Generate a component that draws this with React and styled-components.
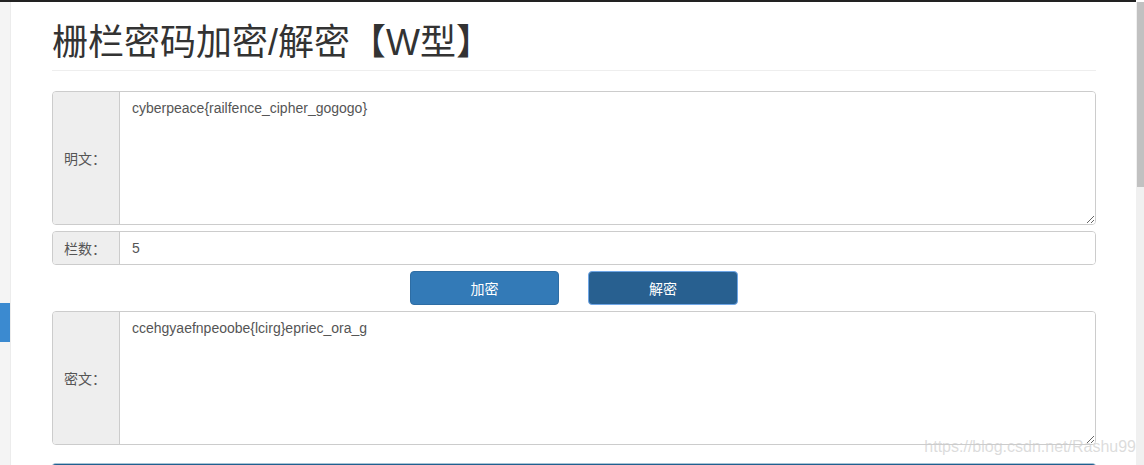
import React from 'react';
import styled, { createGlobalStyle } from 'styled-components';

const GlobalStyle = createGlobalStyle`
  html, body {
    margin: 0;
    padding: 0;
    overflow: hidden;
    background: #fff;
  }
  * {
    box-sizing: border-box;
  }
`;

const FONT = `"Liberation Sans", Arial, "Noto Sans CJK SC", sans-serif`;

const Page = styled.div`
  height: 465px;
  display: flex;
  flex-direction: column;
  font-family: ${FONT};
  font-size: 14px;
  color: #333;
`;

const TopBar = styled.div`
  height: 2px;
  background: #222;
  margin-right: 8px;
`;

const Body = styled.div`
  flex: 1;
  display: flex;
  min-height: 0;
`;

const Sidebar = styled.div`
  width: 11px;
  background: #f4f4f4;
  border-right: 1px solid #ececec;
  display: flex;
  flex-direction: column;
`;

const SideMarker = styled.div`
  margin-top: 301px;
  height: 39px;
  width: 10px;
  background: #3b8ad0;
`;

const Main = styled.div`
  flex: 1;
  padding: 0 40px 0 41px;
  overflow: hidden;
  position: relative;
`;

const Title = styled.h1`
  margin: 21px 0 20px;
  padding-bottom: 7px;
  border-bottom: 1px solid #eee;
  font-family: "Liberation Sans", "Noto Sans CJK SC", sans-serif;
  font-size: 36px;
  font-weight: 400;
  line-height: 1.1;
  color: #333;
`;

const Group = styled.div`
  display: flex;
  border: 1px solid #ccc;
  border-radius: 4px;
  overflow: hidden;
  margin-bottom: ${(p) => p.$gap || 6}px;
  height: ${(p) => p.$h}px;
  box-shadow: inset 0 1px 1px rgba(0, 0, 0, 0.075);
`;

const Addon = styled.div`
  width: 67px;
  flex-shrink: 0;
  background: #eee;
  border-right: 1px solid #ccc;
  color: #555;
  display: flex;
  align-items: center;
  justify-content: center;
  padding-right: 2px;
`;

const Area = styled.textarea`
  flex: 1;
  border: 0;
  outline: 0;
  padding: 7px 12px;
  font-family: ${FONT};
  font-size: 14px;
  line-height: 1.42857;
  color: #555;
  resize: vertical;
  background: #fff;
`;

const Field = styled.input`
  flex: 1;
  border: 0;
  outline: 0;
  padding: 6px 12px;
  font-family: ${FONT};
  font-size: 14px;
  color: #555;
  background: #fff;
`;

const Actions = styled.div`
  display: flex;
  justify-content: center;
  gap: 29px;
  margin-bottom: 6px;
`;

const Button = styled.button`
  width: ${(p) => p.$w}px;
  height: 34px;
  border-radius: 4px;
  font-family: ${FONT};
  font-size: 14px;
  color: #fff;
  cursor: pointer;
  background: ${(p) => (p.$active ? '#286090' : '#337ab7')};
  border: 1px solid ${(p) => (p.$active ? '#6fa6e6' : '#2e6da4')};
`;

const BottomPanel = styled.div`
  margin-top: 18px;
  height: 20px;
  background: #20608f;
  border-top: 1px solid #a9c3d6;
  border-radius: 4px 4px 0 0;
`;

const Watermark = styled.div`
  position: absolute;
  right: 0;
  top: 436px;
  font-size: 16px;
  color: rgba(205, 205, 205, 0.7);
  pointer-events: none;
  white-space: nowrap;
`;

const Scrollbar = styled.div`
  width: 8px;
  background: #f0f0f0;
  display: flex;
  flex-direction: column;
  padding-left: 1px;
`;

const Thumb = styled.div`
  height: 185px;
  background: #c1c1c1;
`;

export default function App() {
  return (
    <Page>
      <GlobalStyle />
      <TopBar />
      <Body>
        <Sidebar>
          <SideMarker />
        </Sidebar>
        <Main>
          <Title>栅栏密码加密/解密【W型】</Title>
          <Group $h={134} $gap={6}>
            <Addon>明文：</Addon>
            <Area defaultValue="cyberpeace{railfence_cipher_gogogo}" />
          </Group>
          <Group $h={34} $gap={6}>
            <Addon>栏数：</Addon>
            <Field defaultValue="5" />
          </Group>
          <Actions>
            <Button $w={149}>加密</Button>
            <Button $w={150} $active>解密</Button>
          </Actions>
          <Group $h={134}>
            <Addon>密文：</Addon>
            <Area defaultValue="ccehgyaefnpeoobe{lcirg}epriec_ora_g" />
          </Group>
          <BottomPanel />
          <Watermark>https://blog.csdn.net/Rashu99</Watermark>
        </Main>
        <Scrollbar>
          <Thumb />
        </Scrollbar>
      </Body>
    </Page>
  );
}
